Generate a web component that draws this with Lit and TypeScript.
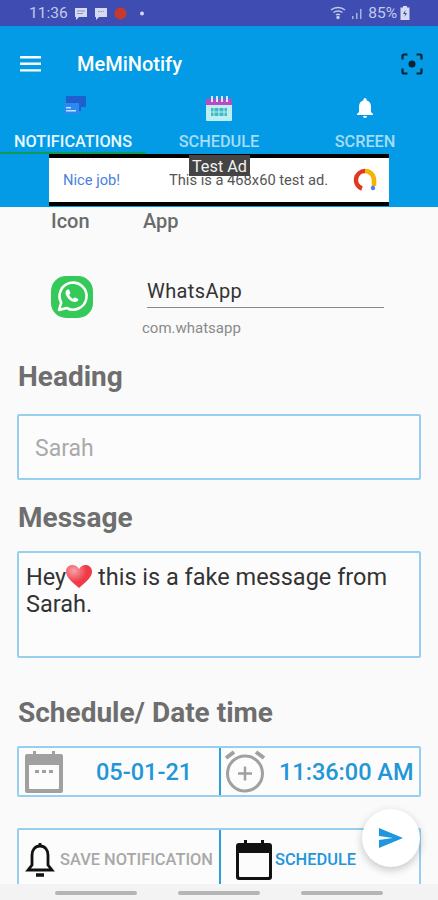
import { LitElement, html, css } from "lit";
import { customElement } from "lit/decorators.js";

@customElement("app-root")
export class AppRoot extends LitElement {
  static styles = css`
    :host {
      display: block;
      width: 438px;
      height: 900px;
      position: relative;
      overflow: hidden;
      background: #fafafa;
      font-family: Roboto, "Liberation Sans", sans-serif;
      color: #333;
    }
    .status {
      height: 26px;
      background: #3f4db3;
      color: #c3cbe8;
      display: flex;
      align-items: center;
      padding: 0 28px 0 29px;
      font-size: 15.5px;
    }
    .status .left,
    .status .right {
      display: flex;
      align-items: center;
    }
    .status .left {
      gap: 6px;
    }
    .status .right {
      margin-left: auto;
      gap: 3px;
    }
    .appbar {
      height: 181px;
      background: #039be5;
      display: flex;
      flex-direction: column;
    }
    .toolbar {
      height: 67px;
      flex: none;
      box-sizing: border-box;
      display: flex;
      align-items: center;
      padding: 9px 15px 0 20px;
    }
    .title {
      margin-left: 36px;
      color: #fff;
      font-size: 20px;
      font-weight: 500;
    }
    .scan {
      margin-left: auto;
      display: block;
    }
    .tabs {
      height: 61px;
      flex: none;
      display: grid;
      grid-template-columns: 146px 146px 146px;
    }
    .tab {
      display: flex;
      flex-direction: column;
      align-items: center;
      font-size: 16.3px;
      font-weight: 500;
      color: #a5dcf7;
      box-sizing: border-box;
      padding-top: 1px;
    }
    .tab.on {
      color: #e8f7ff;
      border-bottom: 2px solid #0f9a55;
    }
    .tab svg {
      height: 30px;
      display: block;
    }
    .tab span {
      margin-top: 8px;
    }
    .ad {
      width: 340px;
      height: 52px;
      margin-left: 49px;
      box-sizing: border-box;
      background: #fff;
      border-top: 4px solid #000;
      border-bottom: 4px solid #000;
      display: flex;
      align-items: center;
      padding: 0 12px 0 14px;
      font-size: 14.7px;
      color: #555;
    }
    .nice {
      color: #4a7fe0;
      width: 106px;
    }
    .ad-logo {
      margin-left: auto;
      display: block;
    }
    .test-ad {
      position: absolute;
      left: 189px;
      top: 155px;
      width: 61px;
      height: 21px;
      background: #444;
      color: #f0f0f0;
      font-size: 16.3px;
      line-height: 23px;
      text-align: center;
    }
    .body {
      padding: 0 17px;
    }
    .cols {
      display: flex;
      padding-left: 34px;
      height: 28px;
      align-items: center;
      font-size: 20px;
      font-weight: 500;
      color: #6b6b6b;
    }
    .cols span:first-child {
      width: 92px;
    }
    .app-row {
      display: flex;
      padding: 41px 0 0 34px;
    }
    .wa {
      display: block;
      width: 42px;
      height: 42px;
    }
    .app-info {
      margin-left: 49px;
      width: 242px;
    }
    .app-name {
      margin-left: 5px;
      height: 32px;
      box-sizing: border-box;
      border-bottom: 1px solid #888;
      font-size: 20px;
      line-height: 31px;
      color: #333;
      width: 237px;
      letter-spacing: 0.4px;
    }
    .pkg {
      font-size: 15px;
      color: #8a8a8a;
      margin-top: 11px;
      line-height: 18px;
    }
    h2 {
      margin: 0 0 0 1px;
      font-size: 28px;
      line-height: 32px;
      font-weight: 700;
      color: #6e6e6e;
    }
    .heading {
      margin-top: 24px;
    }
    .box {
      border: 2px solid #97cfee;
      border-radius: 2px;
      box-sizing: border-box;
      background: #fcfcfc;
    }
    .heading-box {
      height: 66px;
      margin-top: 21px;
      padding-left: 16px;
      font-size: 23px;
      line-height: 66px;
      color: #aaa;
    }
    .message {
      margin-top: 22px;
    }
    .msg-box {
      height: 107px;
      margin-top: 17px;
      padding: 11px 7px;
      font-size: 23.5px;
      line-height: 27px;
      color: #333;
    }
    .heart {
      display: inline-block;
      vertical-align: -4px;
    }
    .sched {
      margin-top: 39px;
    }
    .split {
      display: grid;
      grid-template-columns: 200px 200px;
    }
    .dt {
      height: 51px;
      margin-top: 17px;
    }
    .cell {
      display: flex;
      align-items: center;
      min-width: 0;
    }
    .cell + .cell {
      border-left: 2px solid #2f9fdc;
    }
    .val {
      font-size: 23.5px;
      font-weight: 500;
      color: #2196d8;
      white-space: nowrap;
    }
    .ic-date {
      margin-left: 5px;
    }
    .val-date {
      margin-left: 32px;
    }
    .ic-time {
      margin-left: 3px;
    }
    .val-time {
      margin-left: 11px;
    }
    .actions {
      height: 80px;
      margin-top: 31px;
    }
    .action {
      font-size: 16.4px;
      font-weight: 500;
      white-space: nowrap;
      padding-top: 6px;
      align-items: flex-start;
    }
    .ic-bell {
      margin: 6px 0 0 6px;
    }
    .save {
      color: #a8a8a8;
      margin: 14px 0 0 5px;
    }
    .ic-cal {
      margin: 4px 0 0 15px;
    }
    .go {
      color: #2196d8;
      margin: 14px 0 0 3px;
    }
    .fab {
      position: absolute;
      left: 362px;
      top: 809px;
      width: 58px;
      height: 58px;
      border-radius: 50%;
      background: #fff;
      box-shadow: 0 3px 8px rgba(0, 0, 0, 0.22);
      display: flex;
      align-items: center;
      justify-content: center;
    }
    .nav {
      position: absolute;
      left: 0;
      right: 0;
      top: 884px;
      height: 16px;
      background: #f3f3f3;
      display: flex;
      justify-content: center;
      gap: 41px;
      padding-top: 7px;
      box-sizing: border-box;
    }
    .nav i {
      width: 82px;
      height: 4px;
      border-radius: 2px;
      background: #b5b5b5;
    }
  `;

  render() {
    return html`
      <div class="status">
        <div class="left">
          <span>11:36</span>
          <svg width="14" height="13" viewBox="0 0 14 13"><path d="M1 1h12v9H5l-3 3v-3H1z" fill="#d5daf0"/><path d="M3 4h8M3 6.500h6" stroke="#8a93cf"/></svg>
          <svg width="14" height="13" viewBox="0 0 14 13"><path d="M1 1h12v9H5l-3 3v-3H1z" fill="#d5daf0"/><path d="M4 4.500h6" stroke="#8a93cf" stroke-dasharray="1.500 1"/></svg>
          <svg width="13" height="13" viewBox="0 0 13 13"><circle cx="6.500" cy="6.500" r="6" fill="#c53a2c"/></svg>
          <svg width="14" height="13" viewBox="0 0 14 13"><circle cx="9" cy="6.500" r="2" fill="#d5daf0"/></svg>
        </div>
        <div class="right">
          <svg width="18" height="14" viewBox="0 0 18 14" fill="none" stroke="#c3cbe8" stroke-width="1.500"><path d="M1 4c4-3.500 10-3.500 14 0M3.500 6.500c2.500-2 6.500-2 9 0M6 9c1.300-1 2.700-1 4 0"/><circle cx="8" cy="11.500" r="1" fill="#c3cbe8"/></svg>
          <svg width="14" height="14" viewBox="0 0 14 14" fill="#a9b2df"><path d="M1 10h1.500v3H1zM5 7h1.500v6H5zM9 3h1.500v10H9z"/></svg>
          <span>85%</span>
          <svg width="10" height="14" viewBox="0 0 10 14"><path d="M3 0h4v1.500h2.500V14H.5V1.500H3z" fill="#d5daf0"/><path d="M5.500 4 3 8h2l-.5 3L7 7H5z" fill="#3f4db3"/></svg>
        </div>
      </div>

      <div class="appbar">
        <div class="toolbar">
          <svg width="21" height="16" viewBox="0 0 21 16" fill="#fff"><path d="M0 0h21v2.400H0zM0 6.600h21V9H0zM0 13.200h21v2.400H0z"/></svg>
          <div class="title">MeMiNotify</div>
          <svg class="scan" width="22" height="22" viewBox="0 0 22 22" fill="none" stroke="#0b2233" stroke-width="2.200"><path d="M1.500 6.500V3a1.500 1.500 0 0 1 1.500-1.500h3.500M15.500 1.500H19A1.500 1.500 0 0 1 20.500 3v3.500M20.500 15.500V19a1.500 1.500 0 0 1-1.500 1.500h-3.500M6.500 20.500H3A1.500 1.500 0 0 1 1.500 19v-3.500"/><circle cx="11" cy="11" r="3.500" fill="#0b2233" stroke="none"/></svg>
        </div>
        <div class="tabs">
          <div class="tab on">
            <svg width="26" height="30" viewBox="0 0 26 30"><path d="M6 2h20v11h-5v4H6z" fill="#1f5fd0"/><path d="M4 9h15v11H4z" fill="#2a8af0"/><path d="M6 13h5v1.500H6zM6 16h10v1.500H6z" fill="#bfe3ff"/></svg>
            <span>NOTIFICATIONS</span>
          </div>
          <div class="tab">
            <svg width="28" height="30" viewBox="0 0 28 30"><path d="M1 5h26v6H1z" fill="#b84cc4"/><path d="M1 11h26v15a1 1 0 0 1-1 1H2a1 1 0 0 1-1-1z" fill="#bdeef2"/><path d="M6 14h16v8H6z" fill="#3fb9c4"/><path d="M9 14v8M14 14v8M19 14v8M6 18h16" stroke="#bdeef2"/><path d="M6 2h2v6H6zM11 2h2v6h-2zM16 2h2v6h-2zM21 2h2v6h-2z" fill="#e8e0f5"/></svg>
            <span>SCHEDULE</span>
          </div>
          <div class="tab">
            <svg width="20" height="30" viewBox="0 0 20 30" fill="#fff"><path d="M10 4a1.500 1.500 0 0 1 1.500 1.500v.7C14.500 7 16 9.500 16 12.500V18l2 2v1H2v-1l2-2v-5.500c0-3 1.500-5.500 4.500-6.300v-.7A1.500 1.500 0 0 1 10 4zM8 22h4a2 2 0 0 1-4 0z"/></svg>
            <span>SCREEN</span>
          </div>
        </div>
        <div class="ad">
          <span class="nice">Nice job!</span>
          <span>This is a 468x60 test ad.</span>
          <svg class="ad-logo" width="24" height="24" viewBox="0 0 24 24" fill="none" stroke-width="4.500"><path d="M12 3a9 9 0 0 1 9 9v6" stroke="#f4b400"/><path d="M12 3a9 9 0 0 0-3 17.500" stroke="#e0391f"/><circle cx="20" cy="20" r="2.200" fill="#4285f4"/></svg>
        </div>
      </div>
      <div class="test-ad">Test Ad</div>

      <div class="body">
        <div class="cols"><span>Icon</span><span>App</span></div>
        <div class="app-row">
          <svg class="wa" viewBox="0 0 42 42">
            <rect width="42" height="42" rx="15" fill="#35c95a"/>
            <path d="M8 34l2.200-7.400A13.500 13.500 0 1 1 15.600 32z" fill="none" stroke="#fff" stroke-width="2.600" stroke-linejoin="round"/>
            <path d="M16.200 13.500c-2 1.500-2.200 4-.6 6.800 1.800 3 5 5.600 8 5.800 2 .1 3.600-1 3.800-2.800l-3.600-2-1.600 1.500c-1.600-.6-3.200-2.200-4-4l1.300-1.500-1.500-3.800z" fill="#fff"/>
          </svg>
          <div class="app-info">
            <div class="app-name">WhatsApp</div>
            <div class="pkg">com.whatsapp</div>
          </div>
        </div>

        <h2 class="heading">Heading</h2>
        <div class="box heading-box">Sarah</div>

        <h2 class="message">Message</h2>
        <div class="box msg-box">
          Hey<svg class="heart" width="26" height="24" viewBox="0 0 26 24"><defs><radialGradient id="shine" cx="0.3" cy="0.25" r="0.5"><stop offset="0" stop-color="#f7a3a8"/><stop offset="1" stop-color="#ee3b47"/></radialGradient></defs><path d="M13 23C5 16 0 12 0 6.500 0 2.500 3 0 6.500 0 9 0 11.500 1.300 13 4c1.500-2.700 4-4 6.500-4C23 0 26 2.500 26 6.500 26 12 21 16 13 23z" fill="url(#shine)"/></svg> this is a fake message from Sarah.
        </div>

        <h2 class="sched">Schedule/ Date time</h2>
        <div class="box split dt">
          <div class="cell">
            <svg class="ic-date" width="40" height="44" viewBox="0 0 40 44"><path d="M9 1h3v5H9zM28 1h3v5h-3z" fill="#a0a0a0"/><path d="M3 4h34a2 2 0 0 1 2 2v35a2 2 0 0 1-2 2H3a2 2 0 0 1-2-2V6a2 2 0 0 1 2-2zm2 11v23a1 1 0 0 0 1 1h28a1 1 0 0 0 1-1V15z" fill="#a0a0a0"/><path d="M11 20h4v3h-4zM18 20h4v3h-4zM25 20h4v3h-4z" fill="#a0a0a0"/></svg>
            <span class="val val-date">05-01-21</span>
          </div>
          <div class="cell">
            <svg class="ic-time" width="44" height="46" viewBox="0 0 44 46" fill="none" stroke="#a0a0a0" stroke-width="3"><circle cx="21" cy="24.500" r="17.500"/><path d="M21 17.500v14M14 24.500h14" stroke-width="2.500"/><path d="M2 9 10 3M40 9l-8-6" stroke-width="4"/></svg>
            <span class="val val-time">11:36:00 AM</span>
          </div>
        </div>

        <div class="box split actions">
          <div class="cell action">
            <svg class="ic-bell" width="30" height="38" viewBox="0 0 30 38" fill="none" stroke="#111" stroke-width="2.800"><path d="M15 4c-5 0-8 4-8 9v10l-4 5h24l-4-5V13c0-5-3-9-8-9z"/><path d="M15 1v3" /><path d="M11 33h8" stroke-width="3.500"/></svg>
            <span class="save">SAVE NOTIFICATION</span>
          </div>
          <div class="cell action">
            <svg class="ic-cal" width="36" height="40" viewBox="0 0 36 40"><path d="M8 0h3v5H8zM25 0h3v5h-3z" fill="#111"/><path d="M3 3h30a3 3 0 0 1 3 3v31a3 3 0 0 1-3 3H3a3 3 0 0 1-3-3V6a3 3 0 0 1 3-3zm0 10v23a1 1 0 0 0 1 1h28a1 1 0 0 0 1-1V13z" fill="#111"/></svg>
            <span class="go">SCHEDULE</span>
          </div>
        </div>
      </div>

      <div class="fab">
        <svg width="24" height="20" viewBox="0 0 24 20"><path d="M0 0l24 10L0 20v-8l14-2-14-2z" fill="#1e96e0"/></svg>
      </div>
      <div class="nav"><i></i><i></i><i></i></div>
    `;
  }
}
